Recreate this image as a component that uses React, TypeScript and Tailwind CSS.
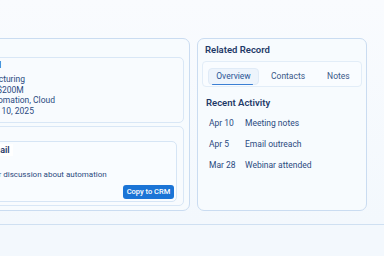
import React from "react";

const details = [
  { label: "Industry:", value: "Manufacturing" },
  { label: "Annual revenue:", value: "$200M" },
  { label: "Focus areas:", value: "Automation, Cloud" },
  { label: "Last contact:", value: "Apr 10, 2025" },
];

const activity = [
  { date: "Apr 10", text: "Meeting notes" },
  { date: "Apr 5", text: "Email outreach" },
  { date: "Mar 28", text: "Webinar attended" },
];

export default function App() {
  return (
    <div
      className="w-[384px] h-[256px] overflow-hidden bg-[#f3f8fd] text-[#2b4a7e]"
      style={{ fontFamily: "Roboto, 'Noto Sans', sans-serif" }}
    >
      <div className="flex gap-[7px] pt-[38px] pb-[13px] border-b border-[#cfe0f2] bg-gradient-to-b from-[#f9fbfe] to-[#f3f8fd]">
        {/* left panel, mostly off-screen */}
        <div className="w-[273px] -ml-[83px] h-[173px] shrink-0 rounded-[7px] border border-[#cadcf1] bg-[#f7fbfe] pt-[18px] pb-[4px] pr-[5px] pl-[6px] flex flex-col gap-[3px]">
          <div className="h-[66px] shrink-0 rounded-[5px] border border-[#d9e7f6] bg-[#f8fbfe] pt-[2px] pl-[8px]">
            <div className="text-[9px] leading-[10px] font-semibold text-[#1f3a68] pl-[9px]">Account Detail</div>
            <div className="mt-[4px] flex flex-col text-[8.5px] leading-[10.5px]">
              {details.map((d) => (
                <div key={d.label} className="flex gap-[4px] whitespace-nowrap">
                  <span className="text-[#6a82a8]">{d.label}</span>
                  <span>{d.value}</span>
                </div>
              ))}
            </div>
          </div>
          <div className="h-[80px] shrink-0 rounded-[5px] border border-[#d9e7f6] bg-[#f8fbfe] pt-[14px] pr-[6px] pb-[3px]">
            <div className="h-full rounded-[5px] border border-[#d6e5f5] bg-[#f9fcff] flex flex-col">
              <div className="flex pl-[36px] pt-[2px] text-[9px] leading-[12px]">
                <span className="bg-white px-[3px] font-semibold text-[#1f3a68]">Draft Email</span>
              </div>
              <div className="mt-[14px] pl-[30px] text-[8px] leading-[10px] whitespace-nowrap">
                Recap of our discussion about automation
              </div>
              <div className="mt-[5px] flex justify-end pr-[2px]">
                <button className="h-[14px] w-[51px] rounded-[3px] bg-[#1b74d6] text-white text-[7.5px] leading-[14px] font-medium">
                  Copy to CRM
                </button>
              </div>
            </div>
          </div>
        </div>

        {/* right panel */}
        <div className="w-[170px] h-[173px] shrink-0 rounded-[7px] border border-[#cadcf1] bg-[#f7fbfe] px-[4px] pt-[1px]">
          <div className="h-[20px] flex items-center pl-[3px] text-[9.5px] font-semibold text-[#1f3a68]">
            Related Record
          </div>
          <div className="mt-[1px] h-[26px] rounded-[4px] border border-[#e2edf8] bg-[#f9fcff] flex items-end pb-[1px] pl-[5px] text-[8.5px]">
            <div className="h-[17px] w-[51px] rounded-[4px] bg-[#edf4fc] border border-[#e0ebf7] flex items-center justify-center relative text-[#2a5595]">
              <span className="leading-[11px]">Overview</span>
              <span className="absolute bottom-[-1px] left-[3px] right-[5px] h-[1.5px] bg-[#3a7fd4] rounded" />
            </div>
            <span className="ml-[12px] h-[17px] leading-[17px] text-[#3a5888]">Contacts</span>
            <span className="ml-[22px] h-[17px] leading-[17px] text-[#3a5888]">Notes</span>
          </div>
          <div className="mt-[9px] pl-[4px] text-[9.5px] leading-[14px] font-semibold text-[#1f3a68]">
            Recent Activity
          </div>
          <div className="mt-[3px] flex flex-col text-[8.5px] leading-[21px]">
            {activity.map((a) => (
              <div key={a.date} className="flex pl-[7px]">
                <span className="w-[36px]">{a.date}</span>
                <span>{a.text}</span>
              </div>
            ))}
          </div>
        </div>
      </div>
    </div>
  );
}
